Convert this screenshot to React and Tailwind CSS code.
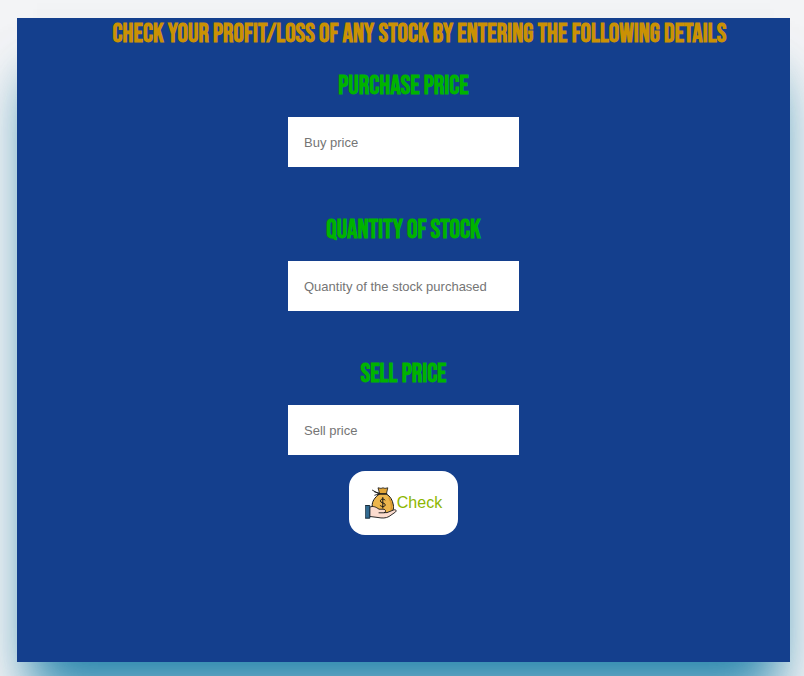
import React from "react";

const fields = [
  { id: "buy-price", label: "PURCHASE PRICE", placeholder: "Buy price" },
  { id: "quantity", label: "QUANTITY OF STOCK", placeholder: "Quantity of the stock purchased" },
  { id: "sell-price", label: "SELL PRICE", placeholder: "Sell price" },
];

function MoneyBagIcon() {
  return (
    <svg className="h-8 w-8" viewBox="0 0 32 32" aria-hidden="true" strokeLinecap="round" strokeLinejoin="round">
      <path d="M14.5 7C9.5 10.5 7 14.5 7.2 19C7.5 23.5 10 26 13 27H24C28 25 29 22 28.3 18C27.5 13 25.5 9.5 21.5 7Z" fill="#edb64c" stroke="#151515" strokeWidth="1" />
      <path d="M24 11C26.5 14.5 27.2 18 26 23" fill="none" stroke="#d9962c" strokeWidth="1.5" />
      <path d="M14.5 6.4L13 .8L16 1.4L18 .8L20 1.4L22.8 .8L21.5 6.4Z" fill="#e3a638" stroke="#151515" strokeWidth=".8" />
      <path d="M13.5 7H22M14 7L7.5 3.2M14 6L9.5 4.8M14 7L9.8 8.2" fill="none" stroke="#151515" strokeWidth=".9" />
      <path d="M20 13C18.8 11.4 15.4 11.8 15.4 14C15.4 16.4 20.2 15.4 20.2 17.8C20.2 20 16.8 20.2 15.2 18.5M17.8 10.5V21" fill="none" stroke="#151515" strokeWidth="1" />
      <path d="M5 20C8 18.6 11 20 14 22.2H18C21 22.2 21.5 25 19 25.6H22L28.5 23C30.5 22.2 32 23.4 30.5 25L24 29.5C21 31.3 17 31.3 13 30.5L5 29.5Z" fill="#fcdccf" stroke="#151515" strokeWidth=".9" />
      <path d="M14 25.8H19" fill="none" stroke="#151515" strokeWidth=".9" />
      <path d="M.6 18.5H4.8V31.2H.6Z" fill="#326b91" stroke="#172c3c" strokeWidth="1" />
    </svg>
  );
}

export default function App() {
  return (
    <div className="flex min-h-screen flex-col overflow-hidden bg-[#f3f4f6] pt-[18px] pr-[14px] pb-[14px] pl-[17px]">
      <main className="flex grow flex-col items-center bg-[#143f8d] shadow-[0_50px_50px_-16px_rgba(0,110,160,0.55),0_40px_50px_-20px_rgba(0,120,155,0.65)]">
        <h1 className="w-full pl-8 text-center font-['Bebas_Neue',sans-serif] text-[26px] leading-[34px] font-bold text-[#ca9104]">
          CHECK YOUR PROFIT/LOSS OF ANY STOCK BY ENTERING THE FOLLOWING DETAILS
        </h1>
        <form className="flex flex-col items-center" onSubmit={(event) => event.preventDefault()}>
          {fields.map((field) => (
            <div key={field.id} className="flex h-36 flex-col items-center pt-[18px]">
              <label
                htmlFor={field.id}
                className="font-['Bebas_Neue',sans-serif] text-[26px] leading-[34px] font-bold text-[#00b300]"
              >
                {field.label}
              </label>
              <input
                id={field.id}
                type="text"
                placeholder={field.placeholder}
                className="mt-[13px] h-[50px] w-[231px] bg-white px-4 font-['Liberation_Sans',sans-serif] text-[13px] text-black placeholder:text-[#757575]"
              />
            </div>
          ))}
          <button
            type="submit"
            className="-mt-[13px] flex h-16 items-center rounded-2xl bg-white px-4 font-['Liberation_Sans',sans-serif] text-base text-[#8db600]"
          >
            <MoneyBagIcon />
            Check
          </button>
        </form>
      </main>
    </div>
  );
}
